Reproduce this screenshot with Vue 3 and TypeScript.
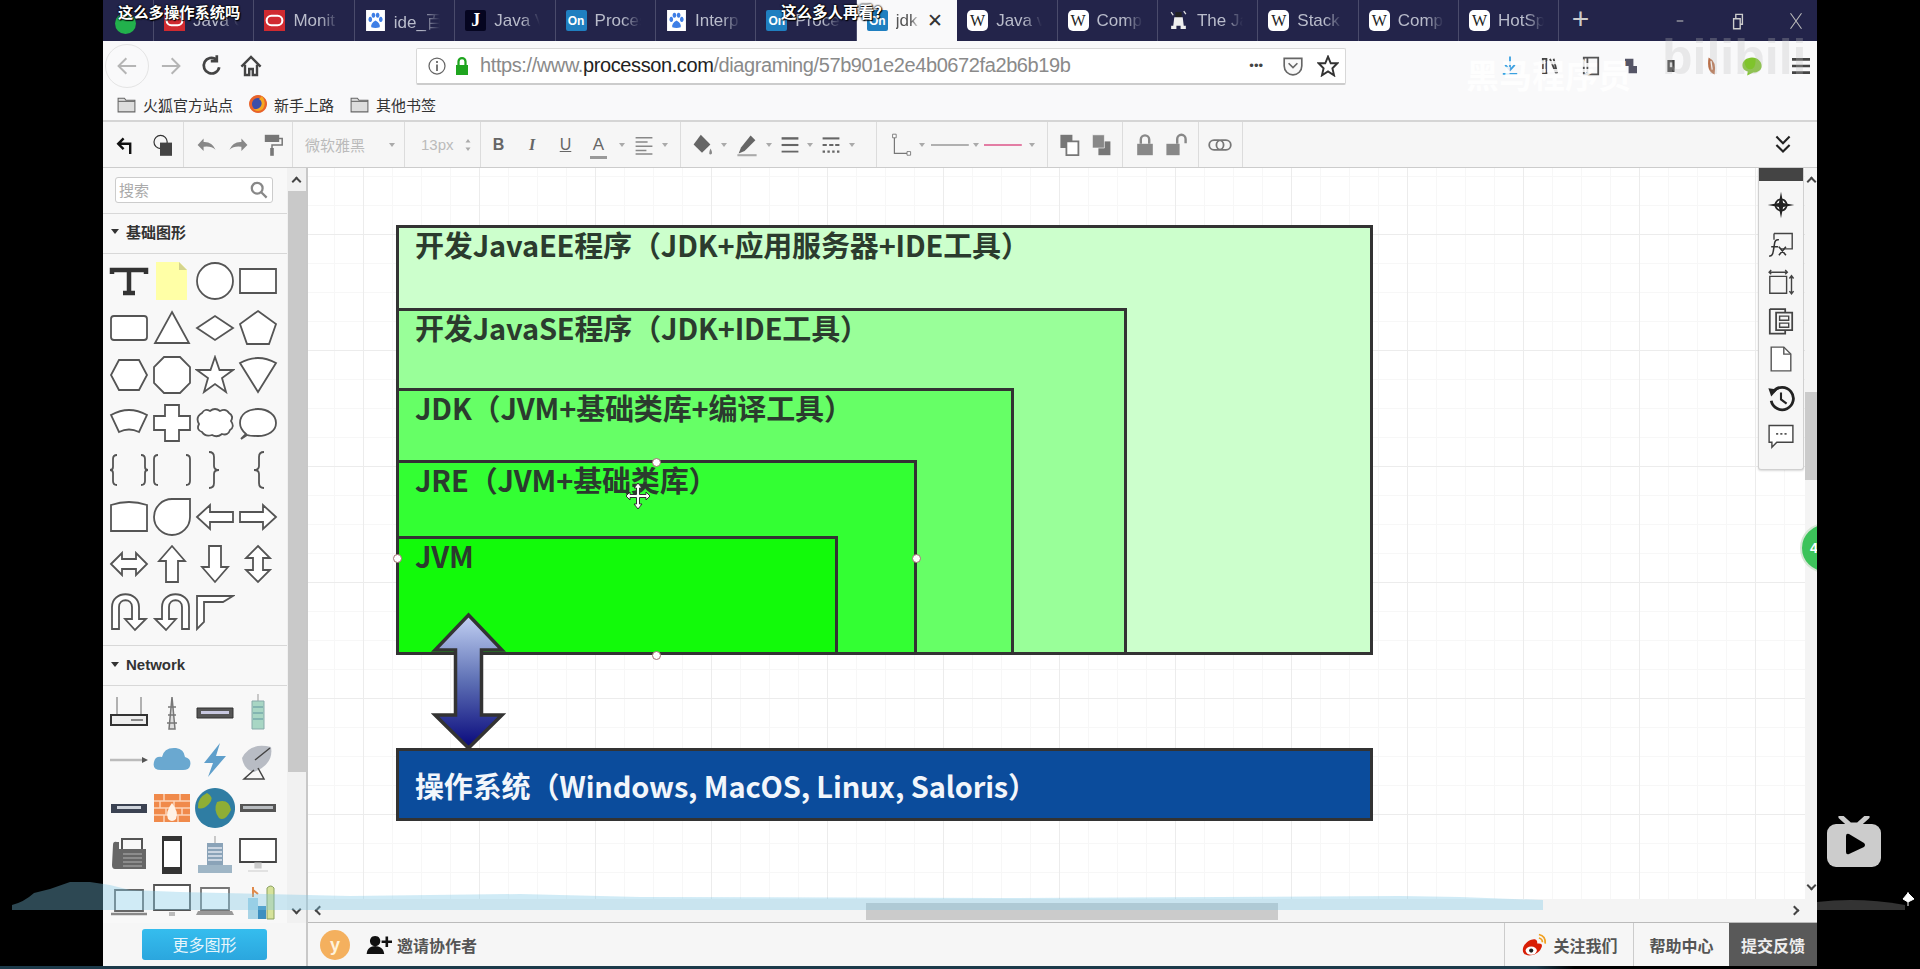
<template>
  <div class="screen">
    <div class="win">
      <!-- browser tabs -->
      <div class="tabbar">
        <div class="tab pinned"><span class="fav f-green"></span></div>
        <div v-for="(tab, i) in tabs" :key="i" class="tab" :class="{ active: tab.active }">
          <span class="fav" :class="'f-' + tab.icon">
            <Ico v-if="favParts[tab.icon]" :p="favParts[tab.icon]" :s="21" />
            <template v-else>{{ favText[tab.icon] }}</template>
          </span>
          <span class="tab-label">{{ tab.label }}</span>
          <span v-if="tab.active" class="tab-x">✕</span>
        </div>
        <div class="tab-plus">+</div>
        <div class="win-btns">
          <Ico :p="icons.minimize" :s="22" />
          <Ico :p="icons.restore" :s="22" />
          <Ico :p="icons.close" :s="22" />
        </div>
      </div>

      <!-- address bar -->
      <div class="navbar">
        <div class="nav-back"><Ico :p="icons.navBack" :s="26" /></div>
        <div class="nav-btn fwd"><Ico :p="icons.navFwd" :s="26" /></div>
        <div class="nav-btn"><Ico :p="icons.reload" :s="24" /></div>
        <div class="nav-btn home"><Ico :p="icons.home" :s="24" /></div>
        <div class="urlbox">
          <Ico :p="icons.info" :s="20" />
          <Ico :p="icons.lock" :s="20" />
          <div class="url">https://www.<b>processon.com</b>/diagraming/57b901e2e4b0672fa2b6b19b</div>
          <div class="url-actions">
            <span class="url-dots">•••</span>
            <Ico :p="icons.pocket" :s="22" />
            <Ico :p="icons.star" :s="22" />
          </div>
        </div>
        <div class="nav-right">
          <Ico v-for="(name, i) in navRight" :key="i" :p="icons[name]" :s="24" />
          <span class="nav-menu"><Ico :p="icons.menu" :s="24" /></span>
        </div>
      </div>

      <!-- bookmarks -->
      <div class="bookmarks">
        <Ico :p="icons.folder" :s="21" />
        <span class="bm">火狐官方站点</span>
        <Ico :p="icons.firefox" :s="20" />
        <span class="bm">新手上路</span>
        <Ico :p="icons.folder" :s="21" />
        <span class="bm">其他书签</span>
      </div>

      <!-- editor toolbar -->
      <div class="toolbar">
        <div v-for="(group, g) in toolGroups" :key="g" class="tgroup" :style="{ width: group.w + 'px' }">
          <template v-for="(item, i) in group.items" :key="i">
            <span v-if="item.text" class="ttext" :class="item.cls" :style="{ width: item.w + 'px' }">{{ item.text }}</span>
            <span v-else-if="item.caret" class="tcaret" :style="{ width: item.w + 'px' }"></span>
            <span v-else class="ticon" :style="{ width: item.w + 'px' }">
              <Ico :p="icons[item.icon!]" :s="item.size || 24" :vw="item.vw" />
            </span>
          </template>
        </div>
        <div class="tool-end"><Ico :p="icons.chevrons" :s="24" /></div>
      </div>

      <div class="body">
        <!-- shape palette -->
        <aside class="sidebar">
          <div class="panel">
            <div class="searchrow">
              <div class="search">
                <span class="search-ph">搜索</span>
                <Ico :p="icons.search" :s="18" />
              </div>
            </div>
            <div class="sec-head cjk"><i></i>基础图形</div>
            <div class="palette basic">
              <div v-for="(shape, i) in basicShapes" :key="i" class="cell">
                <Ico :p="shape" :s="40" :def="outline" />
              </div>
            </div>
            <div class="sec-head"><i></i>Network</div>
            <div class="palette">
              <div v-for="(shape, i) in networkShapes" :key="i" class="cell">
                <Ico :p="shape" :s="40" />
              </div>
            </div>
          </div>
          <div class="side-scroll">
            <span class="arr up"></span>
            <div class="side-thumb"></div>
            <span class="arr down"></span>
          </div>
        </aside>

        <div class="main">
          <div class="main-row">
            <div class="canvas">
              <!-- diagram nodes, placed on the free canvas -->
              <div v-for="box in boxes" :key="box.label" class="box" :style="boxStyle(box)">{{ box.label }}</div>
              <div class="box os" :style="boxStyle(osBox)">{{ osBox.label }}</div>
              <svg class="arrow" width="75" height="140" viewBox="0 0 75 140">
                <defs>
                  <linearGradient id="arrowFill" x1="0" y1="0" x2="0" y2="1">
                    <stop offset="0" stop-color="#c3d2f4" />
                    <stop offset="0.5" stop-color="#5d6fb4" />
                    <stop offset="1" stop-color="#08087c" />
                  </linearGradient>
                </defs>
                <path d="M37.5 3L71 38H50.5V103H71L37.5 136L4 103H24.5V38H4Z" fill="url(#arrowFill)" stroke="#333" stroke-width="3.5" />
              </svg>
              <span v-for="(h, i) in handles" :key="i" class="handle" :style="{ left: h[0] + 'px', top: h[1] + 'px' }"></span>
              <svg class="move-cur" width="24" height="28" viewBox="0 0 24 28">
                <path d="M12 1L16 6H13.5V12.5H20V10L24 14L20 18V15.5H13.5V22H16L12 27L8 22H10.5V15.5H4V18L0 14L4 10V12.5H10.5V6H8Z" fill="#fff" stroke="#333" stroke-width="1" />
              </svg>

              <!-- floating right dock -->
              <div class="dock">
                <div class="dock-head"></div>
                <div class="dock-list">
                  <Ico v-for="(name, i) in dockIcons" :key="i" :p="icons[name]" :s="28" />
                </div>
              </div>
            </div>
            <div class="vscroll">
              <span class="arr up"></span>
              <div class="v-thumb"></div>
              <span class="arr down"></span>
            </div>
            <div class="chat-badge">4</div>
          </div>
          <div class="hscroll">
            <span class="arr left"></span>
            <div class="h-thumb"></div>
            <span class="arr right"></span>
          </div>
        </div>
      </div>

      <!-- status row -->
      <div class="bottombar">
        <div class="bb-left"><div class="more-btn">更多图形</div></div>
        <div class="avatar">y</div>
        <Ico :p="icons.invite" :s="26" />
        <span class="invite">邀请协作者</span>
        <div class="bb-spacer"></div>
        <div class="bb-cell follow"><Ico :p="icons.weibo" :s="28" />关注我们</div>
        <div class="bb-cell help">帮助中心</div>
        <div class="bb-cell feedback">提交反馈</div>
      </div>
    </div>

    <!-- video player overlays -->
    <div class="danmaku d1">这么多操作系统吗</div>
    <div class="danmaku d2">这么多人再看?</div>
    <div class="wm-cn">黑马程序员</div>
    <div class="wm-bili">bilibili</div>
    <svg class="wave" width="1920" height="40" viewBox="0 880 1920 40">
      <path d="M12 910V905Q24 902 34 893L50 889L70 882H90L110 885L130 890L180 892L350 896L520 894L640 897L1000 898L1400 896L1460 897L1543 900V910Z" fill="rgba(125,200,230,.36)" />
      <path d="M1817 902Q1860 897 1905 905V910H1817Z" fill="rgba(255,255,255,.2)" />
    </svg>
    <svg class="play" width="56" height="52" viewBox="0 0 56 52">
      <path d="M15 1L24 9H32L41 1" fill="none" stroke="#ccc" stroke-width="5" stroke-linecap="round" />
      <rect x="1" y="8" width="54" height="43" rx="9" fill="#ccc" />
      <path d="M20 20Q20 17 23 18L38 27Q40 29 38 31L23 38Q20 39 20 36Z" fill="#000" />
    </svg>
    <svg class="pointer" width="14" height="16" viewBox="0 0 14 16">
      <path d="M7 1V15M7 2L13 8L7 11L2 8Z" fill="#fff" stroke="#fff" stroke-width="1" />
    </svg>
    <div class="strip"></div>
  </div>
</template>

<script setup lang="ts">
import { h } from 'vue'
import type { FunctionalComponent } from 'vue'

// d, fill, stroke, stroke width
type Part = [string, string?, string?, number?]

const Ico: FunctionalComponent<{ p: Part[]; s: number; vw?: number; def?: Part }> = (props) => {
  const vw = props.vw || 40
  const width = props.vw ? (props.s * props.vw) / 40 : props.s
  return h(
    'svg',
    { width, height: props.s, viewBox: `0 0 ${vw} 40`, style: 'display:block;flex:none' },
    props.p.map((part) =>
      h('path', {
        d: part[0],
        fill: part[1] ?? props.def?.[1] ?? 'none',
        stroke: part[2] ?? props.def?.[2] ?? 'none',
        'stroke-width': part[3] ?? props.def?.[3] ?? 1,
      }),
    ),
  )
}
Ico.props = ['p', 's', 'vw', 'def']

const outline: Part = ['', '#fff', '#555', 1.8]

const favText: Record<string, string> = { on: 'On', w: 'W', j: 'J' }

const favParts: Record<string, Part[]> = {
  oracle: [
    ['M0 0H40V40H0Z', '#d02a30'],
    ['M14 11H26A9 9 0 0 1 26 29H14A9 9 0 0 1 14 11Z', 'none', '#fff', 4],
  ],
  paw: [
    ['M2 0H38V40H2Z', '#fff'],
    ['M20 20Q30 26 28 33Q20 36 12 33Q10 26 20 20Z', '#3f7fe6'],
    ['M10 13a3.5 5 0 1 0 .1 0ZM30 13a3.5 5 0 1 0 .1 0ZM16 5a3.5 5 0 1 0 .1 0ZM24 5a3.5 5 0 1 0 .1 0Z', '#3f7fe6'],
  ],
  pirate: [
    ['M14 4H26V14H14Z', '#222'],
    ['M12 14H28L30 30H34V36H24V30H16V36H6V30H10Z', '#eee'],
    ['M30 2L34 8M6 4L10 10', 'none', '#ddd', 2.5],
  ],
}

const tabs = [
  { label: 'Java C', icon: 'oracle' },
  { label: 'Monit', icon: 'oracle' },
  { label: 'ide_百', icon: 'paw' },
  { label: 'Java V', icon: 'j' },
  { label: 'Proces', icon: 'on' },
  { label: 'Interp', icon: 'paw' },
  { label: 'Proces', icon: 'on' },
  { label: 'jdk', icon: 'on', active: true },
  { label: 'Java v', icon: 'w' },
  { label: 'Comp', icon: 'w' },
  { label: 'The Ja', icon: 'pirate' },
  { label: 'Stack', icon: 'w' },
  { label: 'Comp', icon: 'w' },
  { label: 'HotSp', icon: 'w' },
]

const icons: Record<string, Part[]> = {
  minimize: [['M14 20H26', 'none', '#bbb', 2]],
  restore: [['M12 16H24V34H12Z M16 16V8H28V26H24', 'none', '#ccc', 2.5]],
  close: [['M10 6L30 34M30 6L10 34', 'none', '#bbb', 2]],
  navBack: [['M34 20H8M19 8L7 20L19 32', 'none', '#b5b5b5', 3]],
  navFwd: [['M6 20H32M21 8L33 20L21 32', 'none', '#b5b5b5', 3]],
  reload: [['M32 22A13 13 0 1 1 27 9M28 2V12H18', 'none', '#444', 4.5]],
  home: [['M4 21L20 5L36 21M10 18V35H17V25H23V35H30V18', 'none', '#444', 4]],
  info: [
    ['M4 20a16 16 0 1 0 32 0a16 16 0 1 0 -32 0', 'none', '#666', 2.5],
    ['M20 17V30M20 10V14', 'none', '#666', 3.5],
  ],
  lock: [
    ['M8 18H32V38H8Z', '#1fa51f'],
    ['M13 18V11A7 7 0 0 1 27 11V18', 'none', '#1fa51f', 4.5],
  ],
  pocket: [
    ['M4 6H36V20A16 16 0 0 1 4 20Z', '#f9f9f9', '#666', 3],
    ['M12 15L20 23L28 15', 'none', '#666', 3],
  ],
  star: [['M20 3L25 15H37L28 24L31 37L20 30L9 37L12 24L3 15H15Z', 'none', '#333', 3.5]],
  folder: [
    ['M4 8H16L19 12H36V34H4Z', '#ddd', '#666', 2],
    ['M4 14H36', 'none', '#666', 2],
  ],
  firefox: [
    ['M20 2a18 18 0 1 0 .1 0Z', '#e8632a'],
    ['M20 8a12 12 0 1 1 -.1 0Z', '#3a4fa8'],
    ['M28 4Q38 16 30 30Q20 38 10 30Q20 32 26 24Q30 14 22 10Z', '#f5a623'],
  ],
  dlArrow: [['M20 4V26M12 18L20 27L28 18M8 33H32', 'none', '#3aa0e0', 3]],
  ext1: [['M8 8H14V32H8ZM20 8L30 32M26 8L32 32', 'none', '#444', 3]],
  ext2: [['M8 6H32V34H8ZM14 6V34', 'none', '#555', 3]],
  ext3: [['M10 8H24V20H30V32H16V20H10Z', '#556', 'none']],
  ext4: [['M14 10H26V30H14Z', '#444', 'none'], ['M18 14H22V22H18Z', '#ddd']],
  ext5: [['M16 6Q30 12 26 34Q12 30 16 6Z', '#b9704a'], ['M20 12L22 26', 'none', '#fff', 2]],
  wechat: [['M20 6C30 6 36 13 36 20C36 27 30 31 22 31L12 36L13 29C7 27 4 24 4 19C4 12 11 6 20 6Z', '#7fc42c']],
  menu: [['M5 9H35M5 20H35M5 31H35', 'none', '#444', 4.5]],
  tBack: [['M16 9L7 18L16 27M7 18H27V35', 'none', '#111', 4]],
  tShape: [
    ['M5 15a11 11 0 1 0 22 0a11 11 0 1 0 -22 0', 'none', '#333', 2],
    ['M15 16H35V38H15Z', '#444'],
  ],
  undo: [['M6 20L16 9V15Q30 14 36 28Q28 21 16 23V30Z', '#888']],
  redo: [['M34 20L24 9V15Q10 14 4 28Q12 21 24 23V30Z', '#888']],
  paint: [['M8 3H32V15H8Z', '#777'], ['M30 9H37V20H20V25', 'none', '#777', 2.5], ['M17 25H23V38H17Z', '#777']],
  spin: [['M15 15L20 8L25 15ZM15 25L20 32L25 25Z', '#aaa']],
  align: [['M6 8H34M6 15H26M6 22H34M6 29H24M6 35H34', 'none', '#888', 2.5]],
  bucket: [
    ['M18 3L34 19L20 33L6 19Z', '#666'],
    ['M34 26Q38 32 36 35Q33 37 32 34Q32 31 34 26Z', '#888'],
  ],
  pen: [['M26 4L34 12L16 30L6 34L10 24Z', '#666'], ['M4 37H36', 'none', '#aaa', 3.5]],
  lines: [['M6 9H34', 'none', '#666', 4], ['M6 20H34', 'none', '#666', 3.5], ['M6 31H34', 'none', '#666', 3]],
  dashes: [['M6 9H34', 'none', '#666', 3.5], ['M6 20H13M17 20H24M27 20H34', 'none', '#666', 3.5], ['M6 31H10M14 31H18M22 31H26M30 31H34', 'none', '#666', 3.5]],
  connector: [['M9 5V34H30', 'none', '#777', 2], ['M6 2H12V8H6ZM30 31H36V37H30Z', '#fff', '#777', 1.5]],
  lineA: [['M0 20H54', 'none', '#999', 2]],
  lineB: [['M0 20H54', 'none', '#d58', 2]],
  front: [['M4 3H24V25H4Z', '#777'], ['M14 14H34V37H14Z', '#fff', '#777', 3]],
  backw: [['M14 14H34V37H14Z', '#777'], ['M4 3H24V25H4Z', '#888', '#fff', 1]],
  tLock: [['M7 18H33V37H7Z', '#888'], ['M13 18V11A7 7 0 0 1 27 11V18', 'none', '#888', 4]],
  tUnlock: [['M4 18H26V37H4Z', '#888'], ['M22 18V10A7 7 0 0 1 36 10V17', 'none', '#888', 4]],
  link: [['M18 12H10A8 8 0 0 0 10 28H18A8 8 0 0 0 18 12ZM22 12H30A8 8 0 0 1 30 28H22A8 8 0 0 1 22 12Z', 'none', '#777', 3]],
  chevrons: [['M9 6L20 17L31 6M9 20L20 31L31 20', 'none', '#222', 3.5]],
  search: [['M4 16a12 12 0 1 0 24 0a12 12 0 1 0 -24 0M25 25L37 37', 'none', '#888', 5]],
  invite: [
    ['M14 6a8 8 0 1 0 .1 0ZM1 34C2 24 8 22 14 22C20 22 27 24 28 34Z', '#111'],
    ['M32 7V23M24 15H40', 'none', '#111', 4],
  ],
  weibo: [
    ['M4 27C4 18 16 10 22 12C26 14 24 18 25 18C31 17 33 20 30 25C28 31 19 35 13 35C8 35 4 32 4 27Z', '#d81e06'],
    ['M8 28a8 6 0 1 0 16 0a8 6 0 1 0 -16 0', '#fff'],
    ['M13 28a3 3 0 1 0 6 0a3 3 0 1 0 -6 0', '#222'],
    ['M27 5Q37 7 36 18M27 10Q32 11 32 16', 'none', '#f0a020', 2.5],
  ],
  compass: [
    ['M20 1L23 17L39 20L23 23L20 39L17 23L1 20L17 17Z', '#222'],
    ['M20 12a8 8 0 1 0 .1 0Z', 'none', '#222', 2.5],
  ],
  fx: [
    ['M10 5H36V27H20', 'none', '#444', 2],
    ['M10 5V14', 'none', '#444', 2],
    ['M3 37Q8 38 9 30L11 18Q12 13 17 14M6 24H16M17 24L27 36M27 24L17 36', 'none', '#333', 2.2],
  ],
  resize: [
    ['M4 12H28V36H4Z', 'none', '#444', 2],
    ['M4 6H28M6 3L3 6L6 9M26 3L29 6L26 9M35 12V36M32 15L35 11L38 15M32 33L35 37L38 33', 'none', '#444', 2],
  ],
  pages: [
    ['M4 3H26V8M4 3V38H26V34', 'none', '#444', 2.5],
    ['M13 8H36V33H13Z', '#f5f5f5', '#444', 2.5],
    ['M18 13H31V19H18ZM18 23H31V29H18Z', 'none', '#444', 2],
  ],
  page: [
    ['M6 3H24L34 13V37H6Z', '#fff', '#555', 2],
    ['M24 3V13H34', 'none', '#555', 2],
  ],
  history: [
    ['M9 11A16 16 0 1 1 6 24', 'none', '#222', 4],
    ['M2 6L15 8L6 18Z', '#222'],
    ['M20 12V22L28 28', 'none', '#222', 3],
  ],
  comment: [
    ['M3 5H37V29H14L7 36V29H3Z', '#fff', '#444', 2],
    ['M13 17H16M19 17H22M25 17H28', 'none', '#555', 2.5],
  ],
}

const navRight = ['dlArrow', 'ext1', 'ext2', 'ext3', 'ext4', 'ext5', 'wechat']
const dockIcons = ['compass', 'fx', 'resize', 'pages', 'page', 'history', 'comment']

type ToolItem = { w: number; icon?: string; text?: string; cls?: string; caret?: boolean; size?: number; vw?: number }

const car = (w = 14): ToolItem => ({ w, caret: true })

const toolGroups: { w: number; items: ToolItem[] }[] = [
  { w: 81, items: [{ w: 4, text: ' ' }, { w: 37, icon: 'tBack' }, { w: 37, icon: 'tShape' }] },
  { w: 109, items: [{ w: 5, text: ' ' }, { w: 33, icon: 'undo' }, { w: 33, icon: 'redo' }, { w: 33, icon: 'paint' }] },
  { w: 112, items: [{ w: 12, text: ' ' }, { w: 80, text: '微软雅黑', cls: 'faded' }, car(14)] },
  { w: 76, items: [{ w: 16, text: ' ' }, { w: 40, text: '13px', cls: 'faded' }, { w: 14, icon: 'spin', size: 20 }] },
  {
    w: 200,
    items: [
      { w: 1, text: ' ' },
      { w: 33, text: 'B', cls: 'bold' },
      { w: 34, text: 'I', cls: 'ital' },
      { w: 33, text: 'U', cls: 'under' },
      { w: 33, text: 'A', cls: 'tcolor' },
      car(14),
      { w: 29, icon: 'align' },
      car(14),
    ],
  },
  {
    w: 196,
    items: [
      { w: 6, text: ' ' },
      { w: 30, icon: 'bucket' },
      car(14),
      { w: 32, icon: 'pen' },
      car(12),
      { w: 29, icon: 'lines' },
      car(12),
      { w: 29, icon: 'dashes' },
      car(14),
    ],
  },
  {
    w: 171,
    items: [
      { w: 9, text: ' ' },
      { w: 29, icon: 'connector' },
      car(14),
      { w: 42, icon: 'lineA', vw: 54, size: 28 },
      car(10),
      { w: 44, icon: 'lineB', vw: 54, size: 28 },
      car(14),
    ],
  },
  { w: 75, items: [{ w: 6, text: ' ' }, { w: 32, icon: 'front' }, { w: 32, icon: 'backw' }] },
  { w: 76, items: [{ w: 6, text: ' ' }, { w: 32, icon: 'tLock' }, { w: 30, icon: 'tUnlock' }] },
  { w: 44, items: [{ w: 5, text: ' ' }, { w: 32, icon: 'link' }] },
]

const shape = (d: string): Part[] => [[d]]
const lineShape = (d: string): Part[] => [[d, 'none', '#555', 1.8]]

const basicShapes: Part[][] = [
  [['M3 13V9H37V13M20 9V32M14 32H26', 'none', '#333', 4.5]],
  [['M4 1H27L35 9V39H4Z', '#ffffa6', 'none'], ['M27 1L35 9H27Z', '#d4d48c', 'none']],
  shape('M2 20a18 18 0 1 0 36 0a18 18 0 1 0 -36 0'),
  shape('M2 8H38V32H2Z'),
  shape('M5 8H35Q38 8 38 11V29Q38 32 35 32H5Q2 32 2 29V11Q2 8 5 8Z'),
  shape('M20 4L37 35H3Z'),
  shape('M2 20L20 8L38 20L20 32Z'),
  shape('M20 3L38 16L31 36H9L2 16Z'),
  shape('M10 5H30L38 20L30 35H10L2 20Z'),
  shape('M12 2H28L38 12V28L28 38H12L2 28V12Z'),
  shape('M20 2L24.5 15H38L27 23L31 37L20 29L9 37L13 23L2 15H15.5Z'),
  shape('M2 8Q20 -2 38 8L20 37Z'),
  shape('M2 12Q20 2 38 12L30 29Q20 24 10 29Z'),
  shape('M13 2H27V13H38V27H27V38H13V27H2V13H13Z'),
  shape('M7 10Q10 5 15 8Q20 4 25 8Q31 5 34 10Q39 13 36 18Q40 24 35 27Q33 33 27 31Q22 35 17 32Q10 34 7 29Q1 27 4 21Q0 14 7 10Z'),
  shape('M8 31Q2 26 2 20C2 11 10 6 20 6C30 6 38 12 38 20C38 28 30 33 20 33C16 33 12 33 9 32L3 36Z'),
  lineShape('M8 5Q4 5 4 9V17Q4 20 1 20Q4 20 4 23V31Q4 35 8 35M32 5Q36 5 36 9V17Q36 20 39 20Q36 20 36 23V31Q36 35 32 35'),
  lineShape('M6 5Q2 5 2 9V31Q2 35 6 35M34 5Q38 5 38 9V31Q38 35 34 35'),
  lineShape('M14 2Q19 2 19 7V16Q19 20 24 20Q19 20 19 24V33Q19 38 14 38'),
  lineShape('M26 2Q21 2 21 7V16Q21 20 16 20Q21 20 21 24V33Q21 38 26 38'),
  shape('M2 8Q20 2 38 8V34H2Z'),
  shape('M38 2V20A18 18 0 1 1 20 2Z'),
  shape('M2 20L15 8V15H38V25H15V32Z'),
  shape('M38 20L25 8V15H2V25H25V32Z'),
  shape('M2 20L13 9V15H27V9L38 20L27 31V25H13V31Z'),
  shape('M20 2L33 17H26V38H14V17H7Z'),
  shape('M20 38L33 23H26V2H14V23H7Z'),
  shape('M20 2L32 14H25V26H32L20 38L8 26H15V14H8Z'),
  shape('M3 37V15C3 -2 30 -2 30 15V27H37L26 38L16 27H23V15C23 6 10 6 10 15V37Z'),
  shape('M37 37V15C37 -2 10 -2 10 15V27H3L14 38L24 27H17V15C17 6 30 6 30 15V37Z'),
  shape('M2 37V4H38L28 10H9V30Z'),
]

const hw = (x: number, y: number, w: number, ht: number) => `M${x} ${y}H${x + w}V${y + ht}H${x}Z`

const networkShapes: Part[][] = [
  [
    ['M8 4V22M32 4V22', 'none', '#999', 1.5],
    [hw(2, 22, 36, 10), '#eee', '#333', 2],
    ['M22 27H34', 'none', '#888', 2],
  ],
  [
    ['M17 36L20 4L23 36Z', '#ddd', '#777', 1.5],
    ['M16 14H24M16 22H24M15 30H25', 'none', '#777', 1.5],
  ],
  [[hw(2, 15, 36, 10), '#555', '#333', 1], [hw(6, 18, 28, 3), '#c8c8e0']],
  [
    ['M20 1V8', 'none', '#999', 1],
    ['M14 8H26V36H14Z', '#a8d6c4', '#8aa', 1],
    ['M15 14H25M15 20H25M15 26H25', 'none', '#7aa', 1.5],
  ],
  [['M1 20H34', 'none', '#bbb', 2.5], ['M33 17L39 20L33 23Z', '#555']],
  [['M9 30Q0 30 2 22Q3 16 10 17Q12 7 24 8Q32 9 33 17Q40 19 38 26Q37 30 31 30Z', '#6aa8d0']],
  [['M25 3L9 23H18L13 37L31 16H21Z', '#5f9fcb']],
  [
    ['M4 18Q12 2 33 7Q36 24 16 32Q6 30 4 18Z', '#b8bcc4'],
    ['M17 20L32 8M16 30L6 39H26L20 28', 'none', '#444', 1.5],
  ],
  [[hw(2, 16, 36, 9), '#3b4252'], [hw(8, 18, 24, 3), '#cfd4dc']],
  [
    [hw(2, 6, 36, 28), '#f08a4b'],
    ['M2 13H38M2 20H38M2 27H38M12 6V13M28 6V13M8 13V20M22 13V20M14 20V27M30 20V27M12 27V34M26 27V34', 'none', '#fcd3b8', 1.5],
    ['M20 15Q27 24 24 31Q20 35 16 31Q13 24 20 15Z', '#fff2e6'],
  ],
  [
    ['M20 0a20 20 0 1 0 .1 0Z', '#2f7da3'],
    ['M12 5Q20 9 14 16Q8 22 3 20Q2 10 12 5ZM22 14Q34 10 36 22Q30 34 24 30Q18 22 22 14Z', '#8fae35'],
  ],
  [[hw(2, 16, 36, 8), '#555'], [hw(5, 18, 30, 3), '#b8bcc0']],
  [
    ['M4 10Q4 6 8 7H10V34H6Q3 34 3 30Z', '#666'],
    [hw(10, 14, 27, 20), '#666'],
    ['M13 14V4H33V14', 'none', '#555', 2],
    ['M14 19H33M14 23H33M14 27H33M14 31H33', 'none', '#999', 1.5],
  ],
  [[hw(10, 1, 20, 38), '#333'], [hw(12, 6, 16, 26), '#fff']],
  [
    ['M20 1V8', 'none', '#999', 1],
    ['M12 8H28V32H12Z', '#8aa3b8'],
    ['M13 13H27M13 17H27M13 21H27M13 25H27', 'none', '#dfe6ee', 1.5],
    [hw(3, 30, 34, 8), '#9fb6c6'],
  ],
  [
    [hw(2, 4, 36, 23), '#fff', '#444', 1.8],
    ['M17 28H23V33H17ZM10 36H30', '#ccc', '#ccc', 1.2],
  ],
  [
    [hw(6, 8, 28, 21), '#fff', '#666', 1.8],
    ['M2 32H38', 'none', '#888', 2.5],
  ],
  [
    [hw(2, 3, 36, 25), '#fff', '#555', 1.8],
    ['M17 30H23V34H17Z', '#bbb'],
  ],
  [
    [hw(6, 6, 28, 22), '#fff', '#777', 1.8],
    ['M3 29H37L39 33H1Z', '#999'],
  ],
  [
    ['M10 16H20V37H10Z', '#a8d4e6'],
    ['M20 24H28V37H20Z', '#3d8fc0'],
    ['M29 6Q33 2 36 6V37H29Z', '#d6e29a', '#8aa060', 1],
    ['M15 5V15M15 8L20 12', 'none', '#e08a4b', 2],
  ],
]

type Box = { label: string; x: number; y: number; right: number; bottom: number; fill: string }

// page coordinates of the diagram, canvas starts at 308,168
const boxes: Box[] = [
  { label: '开发JavaEE程序（JDK+应用服务器+IDE工具）', x: 396, y: 225, right: 1373, bottom: 655, fill: '#ccffcc' },
  { label: '开发JavaSE程序（JDK+IDE工具）', x: 396, y: 308, right: 1127, bottom: 655, fill: '#99ff99' },
  { label: 'JDK（JVM+基础类库+编译工具）', x: 396, y: 388, right: 1014, bottom: 655, fill: '#66ff66' },
  { label: 'JRE（JVM+基础类库）', x: 396, y: 460, right: 917, bottom: 655, fill: '#33ff33' },
  { label: 'JVM', x: 396, y: 536, right: 838, bottom: 655, fill: '#12fa0a' },
]
const osBox: Box = { label: '操作系统（Windows, MacOS, Linux, Saloris）', x: 396, y: 748, right: 1373, bottom: 821, fill: '#0b4c9c' }

function boxStyle(b: Box) {
  return {
    left: b.x - 308 + 'px',
    top: b.y - 168 + 'px',
    width: b.right - b.x + 'px',
    height: b.bottom - b.y + 'px',
    background: b.fill,
  }
}

const handles = [
  [656 - 308, 462 - 168],
  [397 - 308, 558 - 168],
  [916 - 308, 558 - 168],
  [656 - 308, 655 - 168],
]
</script>

<style>
html,
body {
  margin: 0;
  background: #000;
}
</style>

<style scoped>
.screen {
  position: relative;
  width: 1920px;
  height: 969px;
  background: #000;
  overflow: hidden;
  padding-left: 103px;
  box-sizing: border-box;
  font-family: "Liberation Sans", "Noto Sans CJK SC", sans-serif;
}
.win {
  width: 1714px;
  height: 966px;
  display: flex;
  flex-direction: column;
  background: #f9f9fa;
}

/* tabs */
.tabbar {
  height: 41px;
  flex: none;
  display: flex;
  background: #23244a;
  color: #b9bccb;
}
.tab {
  width: 100.4px;
  flex: none;
  display: flex;
  align-items: center;
  gap: 8px;
  padding-left: 10px;
  box-sizing: border-box;
  border-right: 1px solid #4a4b6b;
  overflow: hidden;
  position: relative;
}
.tab.pinned {
  width: 51px;
  padding-left: 12px;
}
.tab.active {
  background: #f9f9fa;
  color: #555;
  border-right: none;
}
.tab-label {
  font-size: 17px;
  white-space: nowrap;
  overflow: hidden;
  width: 46px;
  flex: none;
  -webkit-mask-image: linear-gradient(90deg, #000 60%, transparent);
  mask-image: linear-gradient(90deg, #000 60%, transparent);
}
.active .tab-label {
  width: 24px;
}
.tab-x {
  position: absolute;
  right: 14px;
  font-size: 19px;
  color: #333;
}
.fav {
  width: 21px;
  height: 21px;
  flex: none;
  display: flex;
  align-items: center;
  justify-content: center;
  box-sizing: border-box;
  font-size: 13px;
  font-weight: 700;
  border-radius: 2px;
}
.f-green {
  background: #22b14c;
  border-radius: 50%;
  margin-top: 6px;
}
.f-j {
  background: #050520;
  color: #fff;
  font-family: "Liberation Serif", serif;
  font-size: 18px;
}
.f-on {
  background: #1f7fc0;
  color: #fff;
  font-size: 12px;
}
.f-w {
  background: #fff;
  color: #222;
  border-radius: 5px;
  font-family: "Liberation Serif", serif;
  font-size: 16px;
  font-weight: 400;
}
.tab-plus {
  width: 42px;
  flex: none;
  text-align: center;
  font-size: 30px;
  line-height: 38px;
  color: #ccc;
}
.win-btns {
  flex: 1;
  display: flex;
  align-items: center;
  justify-content: flex-end;
  gap: 36px;
  padding-right: 10px;
}

/* address bar */
.navbar {
  height: 47px;
  flex: none;
  display: flex;
  align-items: center;
  position: relative;
  padding-top: 3px;
  box-sizing: border-box;
}
.nav-back {
  width: 44px;
  height: 44px;
  margin-left: 2px;
  border: 1px solid #e4e4e4;
  border-radius: 50%;
  display: flex;
  align-items: center;
  justify-content: center;
  box-sizing: border-box;
}
.nav-btn {
  width: 41px;
  display: flex;
  justify-content: center;
}
.nav-btn.fwd {
  margin-left: 1px;
}
.nav-btn.home {
  width: 38px;
}
.urlbox {
  width: 930px;
  height: 37px;
  margin-left: 146px;
  box-sizing: border-box;
  border: 1px solid #d8d8d8;
  border-bottom: 2px solid #ccc;
  border-radius: 2px;
  background: #fff;
  display: flex;
  align-items: center;
  padding: 0 6px 0 10px;
  gap: 5px;
}
.url {
  flex: 1;
  font-size: 20px;
  color: #8a8a8a;
  letter-spacing: -0.4px;
  white-space: nowrap;
  margin-left: 3px;
}
.url b {
  font-weight: 400;
  color: #222;
}
.url-actions {
  display: flex;
  align-items: center;
  gap: 13px;
}
.url-dots {
  font-size: 13px;
  color: #444;
  letter-spacing: 0;
  margin-right: 6px;
}
.nav-right {
  flex: 1;
  display: flex;
  justify-content: flex-end;
  align-items: center;
  gap: 16.3px;
  padding-right: 4px;
}
.nav-menu {
  margin-left: 9px;
}
.bookmarks {
  height: 32px;
  flex: none;
  display: flex;
  align-items: center;
  padding-left: 13px;
  border-bottom: 2px solid #d5d5d5;
  box-sizing: content-box;
}
.bm {
  font-size: 15px;
  color: #333;
  margin: 0 15px 0 6px;
}

/* editor toolbar */
.toolbar {
  height: 46px;
  flex: none;
  display: flex;
  background: #f6f6f6;
  border-bottom: 1px solid #ccc;
  box-sizing: border-box;
}
.tgroup {
  flex: none;
  display: flex;
  align-items: center;
  box-sizing: border-box;
  border-right: 1px solid #dcdcdc;
  height: 100%;
}
.ticon {
  display: flex;
  justify-content: center;
  flex: none;
}
.ttext {
  flex: none;
  text-align: center;
  color: #666;
  font-size: 15px;
  white-space: nowrap;
}
.ttext.faded {
  color: #bbb;
  text-align: left;
}
.ttext.bold {
  font-weight: 700;
  font-size: 16px;
  color: #666;
}
.ttext.ital {
  font-style: italic;
  font-weight: 700;
  font-size: 16px;
  font-family: "Liberation Serif", serif;
}
.ttext.under {
  text-decoration: underline;
  font-size: 16px;
}
.ttext.tcolor {
  font-size: 17px;
  padding-bottom: 4px;
  margin-top: 4px;
  background: linear-gradient(#999, #999) center bottom / 17px 3px no-repeat;
}
.tcaret {
  flex: none;
  display: flex;
  justify-content: center;
}
.tcaret::after {
  content: "";
  border-left: 3px solid transparent;
  border-right: 3px solid transparent;
  border-top: 4px solid #aaa;
}
.tool-end {
  flex: 1;
  display: flex;
  align-items: center;
  justify-content: flex-end;
  padding-right: 22px;
}

/* body */
.body {
  flex: 1;
  display: flex;
  min-height: 0;
}
.sidebar {
  width: 205px;
  flex: none;
  display: flex;
  border-right: 2px solid #c8c8c8;
  box-sizing: border-box;
  background: #f8f8f8;
}
.panel {
  width: 184px;
  flex: none;
  overflow: hidden;
}
.searchrow {
  height: 45px;
  box-sizing: border-box;
  padding: 9px 0 0 12px;
}
.search {
  width: 158px;
  height: 26px;
  box-sizing: border-box;
  border: 1px solid #ccc;
  border-radius: 3px;
  background: #fff;
  display: flex;
  align-items: center;
  justify-content: space-between;
  padding: 0 4px 0 3px;
  color: #aaa;
  font-size: 15px;
}
.search-ph {
  margin-top: -2px;
}
.sec-head {
  height: 41px;
  box-sizing: border-box;
  border-top: 1px solid #d8d8d8;
  border-bottom: 1px solid #d8d8d8;
  display: flex;
  align-items: center;
  padding: 0 0 3px 8px;
  gap: 7px;
  font-size: 15px;
  font-weight: 700;
  color: #333;
}
.sec-head.cjk {
  padding-bottom: 5px;
}
.sec-head i {
  border-left: 4px solid transparent;
  border-right: 4px solid transparent;
  border-top: 5px solid #333;
}
.palette {
  display: grid;
  grid-template-columns: repeat(4, 43px);
  grid-auto-rows: 47.3px;
  padding: 3px 0 0 4px;
}
.palette.basic {
  padding-bottom: 10px;
}
.cell {
  display: flex;
  align-items: center;
  justify-content: center;
}
.side-scroll {
  width: 19px;
  flex: none;
  background: #f1f1f1;
  position: relative;
}
.side-thumb {
  position: absolute;
  left: 1px;
  right: 0;
  top: 23px;
  height: 581px;
  background: #c9c9c9;
}
.arr {
  position: absolute;
  width: 7px;
  height: 7px;
  border-left: 2px solid #444;
  border-top: 2px solid #444;
  box-sizing: border-box;
}
.arr.up {
  top: 10px;
  left: 6px;
  transform: rotate(45deg);
}
.arr.down {
  bottom: 10px;
  left: 6px;
  transform: rotate(225deg);
}
.arr.left {
  left: 8px;
  top: 8px;
  transform: rotate(-45deg);
}
.arr.right {
  right: 19px;
  top: 8px;
  transform: rotate(135deg);
}
.main {
  flex: 1;
  min-width: 0;
  display: flex;
  flex-direction: column;
}
.main-row {
  flex: 1;
  display: flex;
  min-height: 0;
  position: relative;
  overflow: hidden;
}
.canvas {
  flex: 1;
  position: relative;
  overflow: hidden;
  background-color: #fff;
  background-image:
    linear-gradient(#ececec 1px, transparent 1px),
    linear-gradient(90deg, #ececec 1px, transparent 1px),
    linear-gradient(#f7f7f7 1px, transparent 1px),
    linear-gradient(90deg, #f7f7f7 1px, transparent 1px);
  background-size: 116px 116px, 116px 116px, 29px 29px, 29px 29px;
  background-position: 0 66px, 55px 0, 0 8px, 26px 0;
}
.vscroll {
  width: 12px;
  flex: none;
  position: relative;
  background: #f4f4f4;
}
.vscroll .arr {
  left: 3px;
}
.v-thumb {
  position: absolute;
  top: 224px;
  left: 0;
  right: 0;
  height: 88px;
  background: #cbcbcb;
}
.hscroll {
  height: 24px;
  flex: none;
  position: relative;
  background: #f4f4f4;
  border-bottom: 1px solid #bbb;
  box-sizing: border-box;
}
.h-thumb {
  position: absolute;
  left: 558px;
  width: 412px;
  top: 4px;
  height: 17px;
  background: #cbcbcb;
}

/* diagram */
.box {
  position: absolute;
  box-sizing: border-box;
  border: 3.5px solid #333;
  padding: 1px 0 0 16px;
  font-family: "Noto Sans CJK SC", "Liberation Sans", sans-serif;
  font-weight: 700;
  font-size: 29px;
  line-height: 30px;
  letter-spacing: -0.15px;
  color: #2b3b2e;
  white-space: nowrap;
}
.box.os {
  color: #f2f6fb;
  display: flex;
  align-items: center;
  padding-top: 0;
}
.arrow {
  position: absolute;
  left: 123px;
  top: 444px;
}
.handle {
  position: absolute;
  width: 9px;
  height: 9px;
  margin: -4.5px 0 0 -4.5px;
  border-radius: 50%;
  background: #fff;
  border: 1px solid #a07070;
  box-sizing: border-box;
}
.move-cur {
  position: absolute;
  left: 318px;
  top: 314px;
}
.dock {
  position: absolute;
  left: 1450px;
  top: 0;
  width: 46px;
  height: 302px;
  background: #f6f6f6;
  border: 1px solid #d0d0d0;
  border-top: none;
  border-radius: 0 0 3px 3px;
  box-sizing: border-box;
  box-shadow: 0 1px 2px rgba(0, 0, 0, 0.15);
}
.dock-head {
  height: 13px;
  background: #444;
}
.dock-list {
  display: flex;
  flex-direction: column;
  align-items: center;
  gap: 10.5px;
  padding-top: 10px;
}
.chat-badge {
  position: absolute;
  left: 1492px;
  top: 355px;
  width: 50px;
  height: 50px;
  border-radius: 50%;
  background: #3cc35a;
  border: 2px solid #d5e5d5;
  box-sizing: border-box;
  color: #fff;
  font-size: 14px;
  font-weight: 700;
  line-height: 46px;
  padding-left: 8px;
}

/* status row */
.bottombar {
  height: 43px;
  flex: none;
  display: flex;
  align-items: center;
  background: #f6f6f6;
  font-family: "Noto Sans CJK SC", sans-serif;
  font-size: 16px;
}
.bb-left {
  width: 205px;
  height: 100%;
  flex: none;
  box-sizing: border-box;
  border-right: 2px solid #c8c8c8;
  padding: 6px 0 0 39px;
}
.more-btn {
  width: 125px;
  height: 31px;
  border-radius: 3px;
  background: linear-gradient(#35bdee, #2ba6de);
  color: #e8f6fc;
  text-align: center;
  line-height: 31px;
  font-size: 16px;
}
.avatar {
  width: 30px;
  height: 30px;
  border-radius: 50%;
  background: #f4b05e;
  color: #fff3dd;
  text-align: center;
  line-height: 30px;
  font-size: 18px;
  margin: 0 16px 0 12px;
  font-family: "Liberation Sans", sans-serif;
  font-weight: 700;
}
.invite {
  margin-left: 5px;
  color: #555;
  font-weight: 700;
}
.bb-spacer {
  flex: 1;
}
.bb-cell {
  height: 100%;
  box-sizing: border-box;
  display: flex;
  align-items: center;
  justify-content: center;
  font-weight: 700;
  color: #555;
  border-left: 1px solid #ccc;
}
.follow {
  width: 129px;
  gap: 5px;
}
.help {
  width: 96px;
}
.feedback {
  width: 88px;
  background: #595959;
  color: #eee;
  border-left: none;
}

/* player overlays */
.danmaku {
  position: absolute;
  top: 1px;
  color: #fff;
  font-family: "Noto Sans CJK SC", sans-serif;
  font-size: 15.3px;
  font-weight: 700;
  line-height: 20px;
  text-shadow: 0 0 2px #000, 0 0 2px #000, 1px 1px 1px #000;
  white-space: nowrap;
}
.d1 {
  left: 118px;
}
.d2 {
  left: 781px;
  font-size: 15.5px;
}
.wm-cn {
  position: absolute;
  left: 1466px;
  top: 50px;
  font-family: "Noto Sans CJK SC", sans-serif;
  font-size: 33px;
  font-weight: 700;
  color: rgba(255, 255, 255, 0.85);
  white-space: nowrap;
}
.wm-bili {
  position: absolute;
  left: 1662px;
  top: 28px;
  font-family: "Liberation Sans", sans-serif;
  font-size: 50px;
  font-weight: 700;
  color: rgba(190, 190, 190, 0.28);
  white-space: nowrap;
}
.wave {
  position: absolute;
  left: 0;
  top: 880px;
  pointer-events: none;
}
.play {
  position: absolute;
  left: 1826px;
  top: 816px;
}
.pointer {
  position: absolute;
  left: 1901px;
  top: 891px;
}
.strip {
  position: absolute;
  left: 0;
  right: 0;
  bottom: 0;
  height: 3px;
  background: linear-gradient(90deg, #1c3a4a 0, #1c3a4a 80%, #000 82%);
}
</style>
